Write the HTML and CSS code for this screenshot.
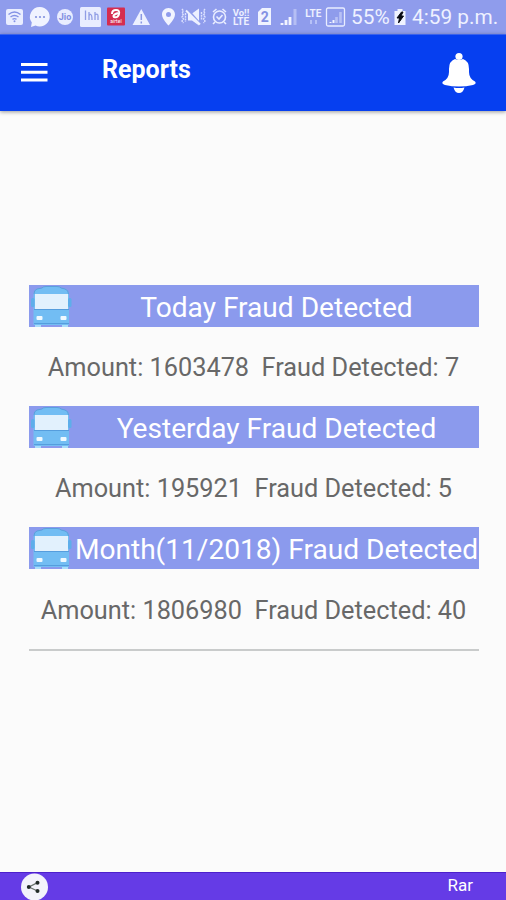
FILE: index.html
```html
<!DOCTYPE html>
<html lang="en">
<head>
<meta charset="utf-8">
<title>Reports</title>
<link rel="stylesheet" href="styles.css">
</head>
<body>
<svg width="0" height="0" class="defs">
  <symbol id="bus" viewBox="0 0 44 42">
    <path d="M4.500 40V10Q4.500 5 8 4L13 3Q14 1.500 17 1.500H28Q31 1.500 32 3L36 4Q40 5 40 10V40Z" fill="#72bdf3"/>
    <path d="M5 9Q5 5 8 4L13 3Q14 1.500 17 1.500H28Q31 1.500 32 3L36 4Q39.500 5 39.500 9" fill="none" stroke="#5b9fdc"/>
    <rect x="2" y="13" width="3.500" height="9" rx="1.500" fill="#5eaeea"/>
    <rect x="39" y="13" width="3.500" height="9" rx="1.500" fill="#5eaeea"/>
    <rect x="6" y="9" width="33" height="15" fill="#e2f1fd"/>
    <path d="M5 24.500H40M5 38.500H40" stroke="#559ddd"/>
    <rect x="7.500" y="31" width="6" height="4" rx="1" fill="#eff9ff"/>
    <rect x="31.500" y="31" width="6" height="4" rx="1" fill="#eff9ff"/>
    <path d="M6 41H12M33 41H39" stroke="#a9ddfa" stroke-width="2"/>
  </symbol>
</svg>
<div class="screen">
  <div class="status">
    <svg width="26" height="34" viewBox="0 0 26 34"><rect x="6" y="9" width="17" height="16" rx="2" fill="#e9edff"/><path d="M8.500 14.500Q14.500 9.500 20.500 14.500M10.500 17Q14.500 14 18.500 17M12.500 19.300Q14.500 18 16.500 19.300" fill="none" stroke="#8392e6" stroke-width="1.400"/><circle cx="14.500" cy="21.300" r="1" fill="#8392e6"/></svg>
    <svg width="28" height="34" viewBox="26 0 28 34"><path d="M40 7a10 9.700 0 1 1-4.500 18.500L31 27l.8-4.500A9.800 9.800 0 0 1 40 7z" fill="#f0f3ff"/><g fill="#8493df"><circle cx="36" cy="17" r="1.100"/><circle cx="40" cy="17" r="1.100"/><circle cx="44" cy="17" r="1.100"/></g></svg>
    <svg width="23" height="34" viewBox="54 0 23 34"><circle cx="65" cy="17" r="8" fill="#e9edff"/><text x="65" y="20.300" class="jio">Jio</text></svg>
    <svg width="27" height="34" viewBox="77 0 27 34"><rect x="80" y="7" width="21" height="20" rx="1.500" fill="#e9edff"/><path d="M85.500 10.500V20M89 12V20M89 16.500Q89 14 90.800 14.500Q92 15 92 20M95 12V20M95 15Q98 13 98 16V20" fill="none" stroke="#909de5" stroke-width="1.300"/></svg>
    <svg width="24" height="34" viewBox="104 0 24 34"><rect x="107" y="7.500" width="18" height="18" rx="1" fill="#d52d50"/><path d="M112 14Q112 10 116 10Q120 10 119 14Q118 18 114 17Q112 15 118 13" fill="none" stroke="#fff" stroke-width="2"/><text x="116" y="23" class="airtel">airtel</text></svg>
    <svg width="28" height="34" viewBox="128 0 28 34"><path d="M141.300 9L150 25H132.500z" fill="#edf0ff"/><path d="M141.300 14V20M141.300 21.500V23.500" stroke="#8997e3" stroke-width="1.500"/></svg>
    <svg width="22" height="34" viewBox="156 0 22 34"><path fill-rule="evenodd" d="M168.500 8C164.500 8 162 11 162 14.400C162 19 168.500 25.500 168.500 25.500S175 19 175 14.400C175 11 172.500 8 168.500 8zm0 4a2.500 2.500 0 1 1 0 5 2.500 2.500 0 0 1 0-5z" fill="#f2f4ff"/></svg>
    <svg width="31" height="34" viewBox="178 0 31 34"><path d="M188 13.500h4l7-5v17l-7-5h-4z" fill="#edf0ff"/><path d="M187 9L201 25" stroke="#8f9cec" stroke-width="2.500"/><path d="M186 10.500L200 24.500" stroke="#edf0ff" stroke-width="2"/><path d="M182 9l1.500 2-1.500 2 1.500 2-1.500 2 1.500 2-1.500 2 1.500 2M185.500 13v9M205 9l-1.500 2 1.500 2-1.500 2 1.500 2-1.500 2 1.500 2-1.500 2M201.500 12v8" fill="none" stroke="#dce1ff" stroke-width="1.400" stroke-dasharray="2 .8"/></svg>
    <svg width="20" height="34" viewBox="209 0 20 34"><g fill="none" stroke="#e9edff" stroke-width="1.600"><circle cx="219.500" cy="17" r="6"/><path d="M213 12l3.500-3M226 12l-3.500-3M215 22l-2 2M224 22l2 2M216.500 16.500l2.500 2.500 3.500-4"/></g></svg>
    <svg width="24" height="34" viewBox="229 0 24 34"><text x="241" y="15.700" class="net small">Vo!!</text><text x="241" y="25" class="net">LTE</text></svg>
    <svg width="23" height="34" viewBox="253 0 23 34"><path d="M262 8h9v17h-13V12z" fill="#f0f3ff"/><text x="264.700" y="21.800" class="sim">2</text></svg>
    <svg width="24" height="34" viewBox="276 0 24 34"><path d="M282 25v-2M286 25v-5M290 25v-8" stroke="#f2f4ff" stroke-width="2.800"/><path d="M295 25V9" stroke="#b5bef4" stroke-width="3"/></svg>
    <svg width="25" height="34" viewBox="300 0 25 34"><text x="313.300" y="17" class="net">LTE</text><path d="M311 20v4M316 20v4" stroke="#c5cdfa" stroke-width="1.500"/></svg>
    <svg width="26" height="34" viewBox="325 0 26 34"><rect x="326.500" y="8" width="18" height="18" rx="1.500" fill="none" stroke="#e9edff" stroke-width="1.300"/><path d="M330.500 23v-1M333.500 23v-3" stroke="#f2f4ff" stroke-width="2"/><path d="M336.500 23v-6M340.500 23V12" stroke="#b8c1f5" stroke-width="2.600"/></svg>
    <span class="percent">55%</span>
    <svg width="14" height="34" viewBox="393 0 14 34"><path d="M394.500 11h3V9h5v2h3v14h-11z" fill="#f0f3ff"/><path d="M401.500 12l-4.500 6h2.500l-1 5 5-7h-2.500l2-4z" fill="#080a13" stroke="#080a13"/></svg>
    <span class="time">4:59 p.m.</span>
  </div>
  <header class="bar">
    <svg class="menu" width="28" height="20" viewBox="0 0 28 20"><path d="M0 2.500H26.500M0 10.300H26.500M0 18H26.500" stroke="#fff" stroke-width="3"/></svg>
    <h1>Reports</h1>
    <svg class="bell" width="36" height="42" viewBox="0 0 36 42"><circle cx="18" cy="4.500" r="3.600" fill="#fff"/><path d="M14 7Q8 9 8 17V20Q8 26.500 2 29.500Q0 31.500 4 33Q18 36 32 33Q36 31.500 34 29.500Q28 26.500 28 20V17Q28 9 22 7Q18 9 14 7ZM12.500 35.500Q18 36.500 23.500 35.500Q22 41 18 41Q14 41 12.500 35.500Z" fill="#fff"/></svg>
  </header>
  <main class="reports">
    <section>
      <h2><svg class="bus" width="44" height="42"><use href="#bus"/></svg><span>Today Fraud Detected</span></h2>
      <p>Amount: 1603478&nbsp; Fraud Detected: 7</p>
    </section>
    <section>
      <h2><svg class="bus" width="44" height="42"><use href="#bus"/></svg><span>Yesterday Fraud Detected</span></h2>
      <p>Amount: 195921&nbsp; Fraud Detected: 5</p>
    </section>
    <section>
      <h2><svg class="bus" width="44" height="42"><use href="#bus"/></svg><span>Month(11/2018) Fraud Detected</span></h2>
      <p>Amount: 1806980&nbsp; Fraud Detected: 40</p>
    </section>
  </main>
  <footer class="ad">
    <svg width="28" height="28" viewBox="0 0 28 28"><circle cx="14.500" cy="14" r="13.500" fill="#f3f3fb"/><path d="M17.500 9.700L9 14L17.500 18" fill="none" stroke="#6b746f" stroke-width="1.300"/><g fill="#222b28"><circle cx="8.800" cy="14" r="2"/><circle cx="17.500" cy="9.700" r="2"/><circle cx="17.500" cy="18" r="2"/></g></svg>
    <span>Rar</span>
  </footer>
</div>
</body>
</html>
```

FILE: styles.css
```css
* { box-sizing: border-box; }
body { margin: 0; font-family: Roboto, sans-serif; background: #fbfbfb; }
svg { display: block; flex: none; }
.defs { display: none; }
.screen { width: 506px; height: 900px; display: flex; flex-direction: column; overflow: hidden; }
.status { height: 34px; flex: none; display: flex; background: #8f9cec; color: #eef1ff; font-size: 20.8px; line-height: 35px; white-space: nowrap; }
.status text { text-anchor: middle; font-family: Roboto, sans-serif; }
.jio { font-size: 9px; font-weight: 700; fill: #8290df; }
.airtel { font-size: 5px; fill: #fff; }
.net { font-size: 10px; font-weight: 700; fill: #edf0ff; }
.small { font-size: 9.5px; }
.sim { font-size: 14px; font-weight: 700; fill: #8391e4; }
.percent { width: 42px; }
.time { padding-left: 5px; }
.bar { height: 77px; flex: none; display: flex; align-items: flex-start; padding: 0 29px 0 21px; background: #063ff0; border-top: 1px solid #3b62ec; box-shadow: 0 1px 4px rgba(0, 0, 0, 0.4); color: #fff; }
.menu { margin-top: 27px; }
.bar h1 { margin: 20px auto 0 53px; font-size: 25px; line-height: 30px; font-weight: 700; }
.bell { margin-top: 17px; }
.reports { flex: 1; margin: 0 27.500px 0 28.500px; padding-top: 174px; }
.reports section { height: 121px; }
.reports section:last-child { height: 124px; border-bottom: 2px solid #c9cbcb; }
.reports h2 { height: 42px; margin: 0; display: flex; background: #8b9aed; color: #fff; font-size: 28.1px; font-weight: 400; line-height: 45px; white-space: nowrap; }
.reports h2 span { flex: 1; text-align: center; padding-left: 2px; }
.reports p { margin: 24px 0 0; text-align: center; color: #686868; font-size: 25.3px; line-height: 33px; white-space: nowrap; }
.reports section:last-child p { padding-top: 1px; }
.ad { height: 28px; flex: none; display: flex; align-items: center; justify-content: space-between; padding: 0 33px 0 20px; background: #653be6; border-top: 1px solid #4d20cc; color: #fff; font-size: 17px; line-height: 24px; }
.ad span { padding-bottom: 4px; }
```
